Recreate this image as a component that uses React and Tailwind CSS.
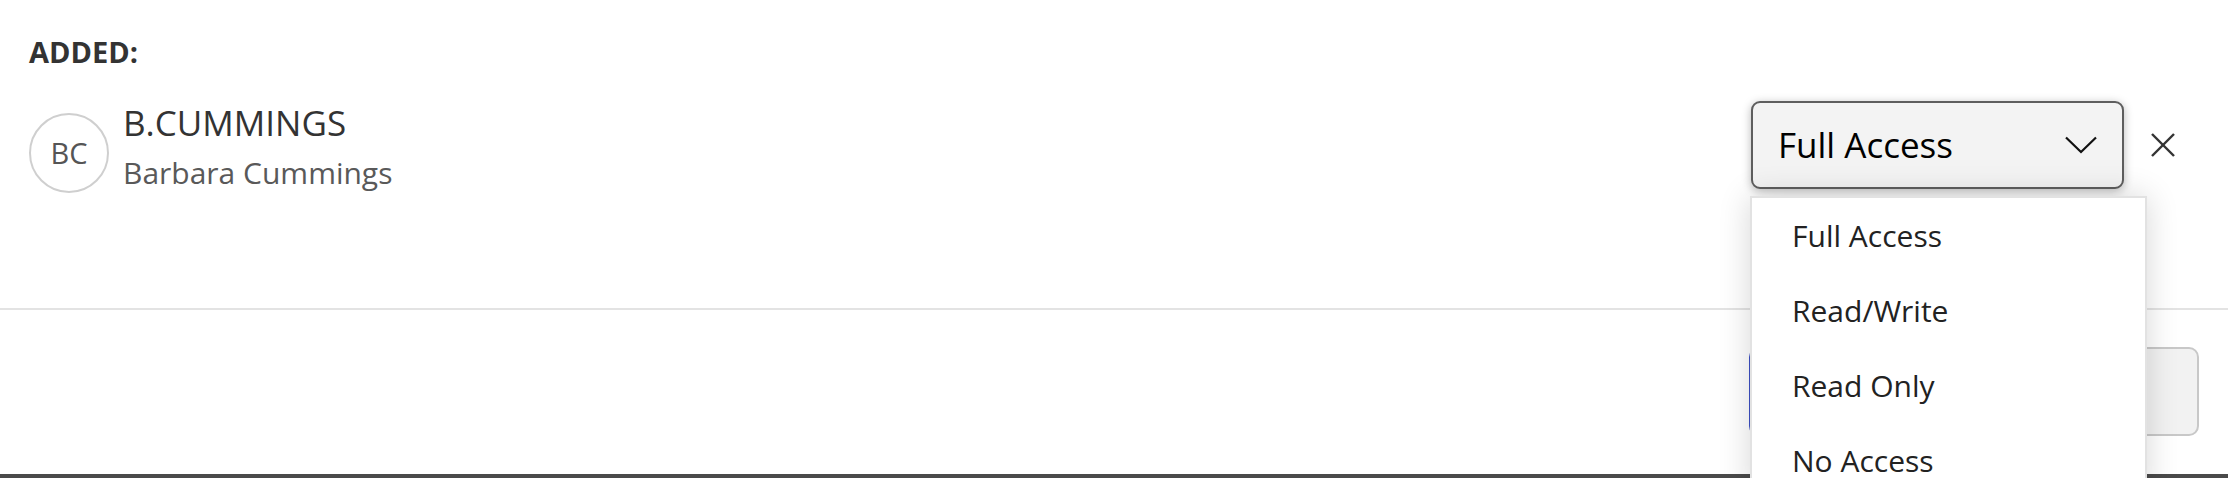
import { useState } from "react";

const OPTIONS = ["Full Access", "Read/Write", "Read Only", "No Access"];

function Chevron() {
  return (
    <svg width="32" height="18" viewBox="0 0 32 18" fill="none">
      <polyline points="1,1.5 16,16 31,1.5" stroke="#111" strokeWidth="2.2" />
    </svg>
  );
}

function CloseIcon() {
  return (
    <svg width="26" height="26" viewBox="0 0 26 26" fill="none">
      <line x1="2" y1="2" x2="24" y2="24" stroke="#333" strokeWidth="2.4" />
      <line x1="24" y1="2" x2="2" y2="24" stroke="#333" strokeWidth="2.4" />
    </svg>
  );
}

export default function App() {
  const [access, setAccess] = useState("Full Access");
  const [open, setOpen] = useState(true);

  return (
    <div className="relative flex h-[478px] w-full flex-col overflow-hidden bg-white font-['Open_Sans',sans-serif]">
      <section className="h-[308px] pl-[29px] pr-[52px] pt-[30px]">
        <h2 className="text-[29px] font-bold leading-[44px] text-[#333]">ADDED:</h2>
        <div className="mt-[25px] flex items-start">
          <div className="mt-[14px] flex h-[80px] w-[80px] items-center justify-center rounded-full border-2 border-[#cfcfcf] text-[29px] text-[#555]">
            BC
          </div>
          <div className="ml-[14px] flex-1">
            <p className="text-[35px] leading-[48px] text-[#333]">B.CUMMINGS</p>
            <p className="mt-[6px] text-[30px] leading-[40px] text-[#595959]">Barbara Cummings</p>
          </div>
          <div className="mt-[2px] flex items-center gap-[26px]">
            <div className="relative z-10">
              <button
                onClick={() => setOpen(!open)}
                className="flex h-[88px] w-[373px] items-center justify-between rounded-[9px] border-2 border-[#5e5e5e] bg-[#f3f3f3] pl-[25px] pr-[25px] text-[35px] text-black shadow-[0_2px_10px_rgba(0,0,0,0.28)]"
              >
                <span>{access}</span>
                <Chevron />
              </button>
              {open ? (
                <ul className="absolute left-[-1px] top-[95px] w-[397px] border-2 border-[#e2e2e2] bg-white shadow-[0_0_30px_rgba(0,0,0,0.16)]">
                  {OPTIONS.map((option) => (
                    <li
                      key={option}
                      onClick={() => setAccess(option)}
                      className="h-[75px] pl-[40px] text-[30px] leading-[75px] text-[#222]"
                    >
                      {option}
                    </li>
                  ))}
                </ul>
              ) : null}
            </div>
            <button aria-label="Remove" className="flex h-[26px] w-[26px] items-center justify-center">
              <CloseIcon />
            </button>
          </div>
        </div>
      </section>
      <div className="h-[2px] bg-[#e3e3e3]" />
      <footer className="flex h-[164px] items-start justify-end gap-[16px] pr-[29px] pt-[37px]">
        <button aria-label="Add" className="h-[89px] w-[235px] rounded-[10px] bg-[#3b4fc4]" />
        <button aria-label="Cancel" className="h-[89px] w-[199px] rounded-[10px] border-2 border-[#c8c8c8] bg-[#f2f2f2]" />
      </footer>
      <div className="h-[4px] bg-[#4a4a4a]" />
    </div>
  );
}
